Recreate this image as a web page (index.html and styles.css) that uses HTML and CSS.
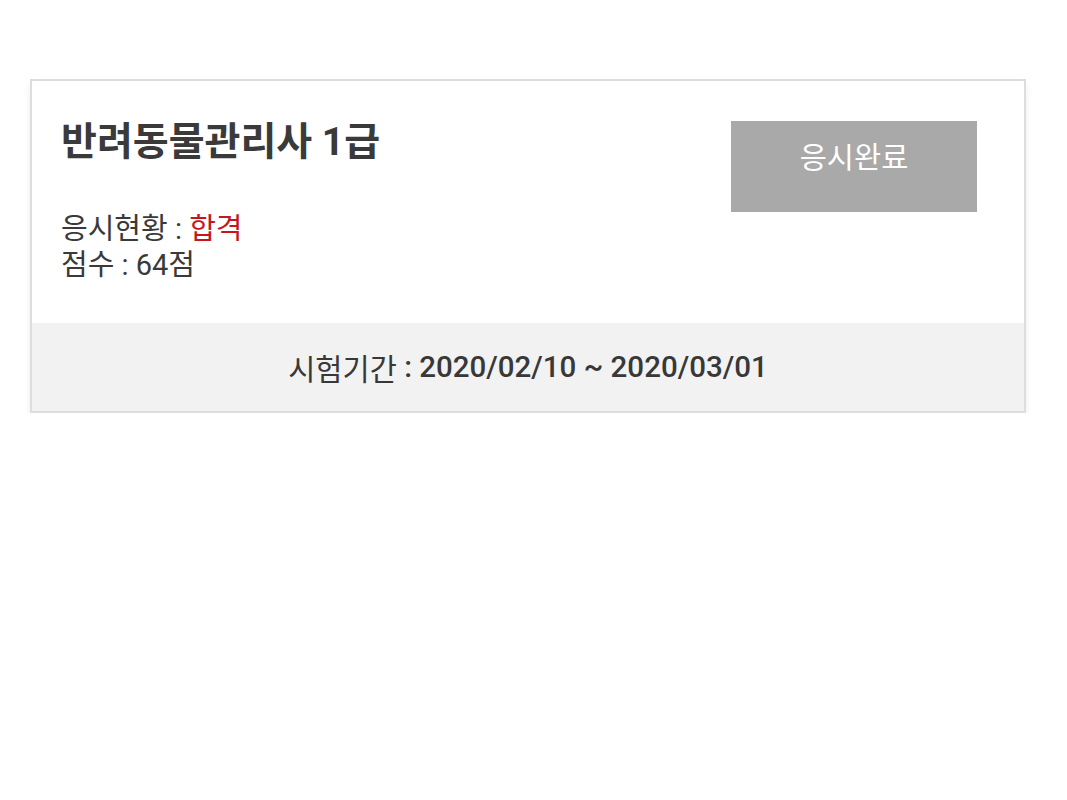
FILE: index.html
```html
<!DOCTYPE html>
<html lang="ko">
<head>
<meta charset="utf-8">
<title>응시현황</title>
<link rel="stylesheet" href="styles.css">
</head>
<body>
<div class="card">
  <div class="card-body">
    <div class="info">
      <h2 class="title">반려동물관리사 1급</h2>
      <p class="line">응시현황 : <span class="pass">합격</span></p>
      <p class="line">점수 : 64점</p>
    </div>
    <div class="btn">응시완료</div>
  </div>
  <div class="card-foot">
    <span class="label">시험기간</span><span class="period">&nbsp;: 2020/02/10 ~ 2020/03/01</span>
  </div>
</div>
</body>
</html>
```
FILE: styles.css
```css
html, body {
  margin: 0;
  padding: 0;
  background: #fff;
}
body {
  font-family: Roboto, "Noto Sans CJK KR", sans-serif;
  color: #383838;
}
.card {
  width: 992px;
  margin: 79px 0 0 30px;
  border: 2px solid #dddddd;
  background: #fff;
  box-shadow: 0 6px 8px rgba(0, 0, 0, 0.07);
}
.card-body {
  display: flex;
  justify-content: space-between;
  align-items: flex-start;
  height: 242px;
  box-sizing: border-box;
  padding: 37px 47px 0 29px;
}
.title {
  margin: 0 0 45px 0;
  font-size: 39px;
  font-weight: 700;
  line-height: 48px;
  color: #3a3a3a;
}
.line {
  margin: 0;
  font-size: 29px;
  line-height: 36px;
  color: #3a3a3a;
}
.pass {
  color: #c4161c;
}
.btn {
  width: 246px;
  height: 91px;
  margin-top: 3px;
  box-sizing: border-box;
  padding-top: 17px;
  background: #a9a9a9;
  color: #fff;
  font-size: 29.5px;
  line-height: 40px;
  text-align: center;
}
.card-foot {
  height: 88px;
  background: #f2f2f2;
  display: flex;
  align-items: center;
  justify-content: center;
  font-size: 29.5px;
  color: #383838;
}
.period {
  font-weight: 500;
}
```
